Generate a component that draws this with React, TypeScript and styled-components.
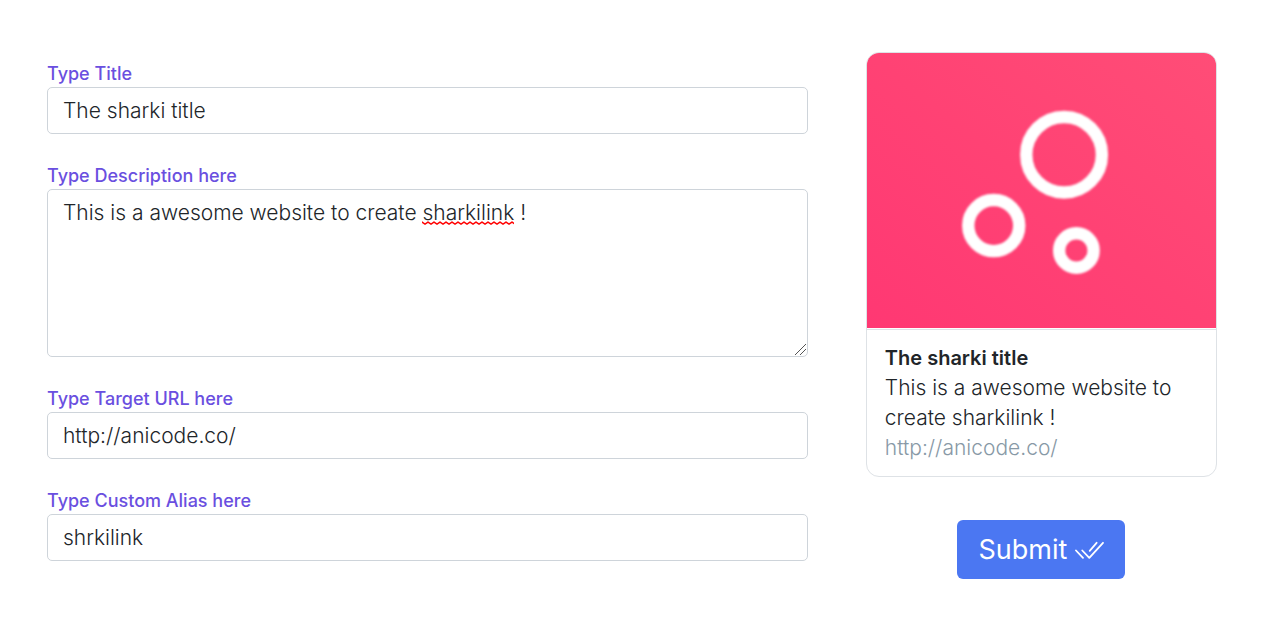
import { useState } from "react";
import styled, { createGlobalStyle, css } from "styled-components";

const GlobalStyle = createGlobalStyle`
  *, *::before, *::after { box-sizing: border-box; }
  body {
    margin: 0;
    background: #fff;
    color: #212529;
    font-family: Inter, "Open Sans", sans-serif;
    font-size: 21px;
    font-weight: 300;
    line-height: 30px;
  }
`;

const Page = styled.main`
  display: grid;
  grid-template-columns: minmax(0, 13fr) minmax(0, 6fr);
  gap: 58px;
  align-items: start;
  padding: 52px 52px 52px 47px;
`;

const Fields = styled.form`
  display: flex;
  flex-direction: column;
  gap: 30px;
  padding-top: 10px;
`;

const Field = styled.div`
  display: flex;
  flex-direction: column;
`;

const Label = styled.label`
  padding-bottom: 2px;
  color: #6a4fe0;
  font-size: 18px;
  font-weight: 500;
  line-height: 23px;
`;

const control = css`
  display: block;
  width: 100%;
  margin: 0;
  padding: 8px 15px;
  border: 1px solid #ced4da;
  border-radius: 5px;
  background: #fff;
  color: #212529;
  font: inherit;
  outline: none;
`;

const TextInput = styled.input`
  ${control}
  height: 47px;
`;

const TextArea = styled.textarea`
  ${control}
  height: 168px;
  resize: vertical;

  &::-webkit-resizer {
    background: linear-gradient(
        135deg,
        transparent 47%,
        #555 47%,
        #555 53%,
        transparent 53%,
        transparent 70%,
        #555 70%,
        #555 76%,
        transparent 76%
      )
      3px 3px / 11px 11px no-repeat;
  }
`;

const AreaWrap = styled.div`
  position: relative;
`;

const Squiggle = styled.svg`
  position: absolute;
  top: 32px;
  left: 375px;
  pointer-events: none;
`;

const Side = styled.aside`
  display: flex;
  flex-direction: column;
  align-items: center;
  gap: 43px;
`;

const Card = styled.article`
  width: 100%;
  overflow: hidden;
  border: 1px solid #dee2e6;
  border-radius: 13px;
`;

const Cover = styled.svg`
  display: block;
  width: 100%;
  height: auto;
`;

const CardBody = styled.div`
  margin-top: 1px;
  padding: 13px 18px;
  border-top: 1px solid #dee2e6;
`;

const CardTitle = styled.h2`
  margin: 0;
  font-size: 20px;
  font-weight: 600;
  line-height: 30px;
`;

const CardText = styled.p`
  margin: 0;
`;

const CardUrl = styled.p`
  margin: 0;
  color: #8899a6;
`;

const SubmitButton = styled.button`
  display: flex;
  align-items: center;
  gap: 8px;
  height: 59px;
  padding: 0 21px;
  border: 0;
  border-radius: 6px;
  background: #4b77f2;
  color: #fff;
  font-family: inherit;
  font-size: 27px;
  font-weight: 400;
  cursor: pointer;
`;

export default function App() {
  const [title, setTitle] = useState("The sharki title");
  const [description, setDescription] = useState(
    "This is a awesome website to create sharkilink !"
  );
  const [url, setUrl] = useState("http://anicode.co/");
  const [alias, setAlias] = useState("shrkilink");

  return (
    <>
      <GlobalStyle />
      <Page>
        <Fields id="link-form" onSubmit={(e) => e.preventDefault()}>
          <Field>
            <Label htmlFor="title">Type Title</Label>
            <TextInput id="title" value={title} onChange={(e) => setTitle(e.target.value)} />
          </Field>
          <Field>
            <Label htmlFor="description">Type Description here</Label>
            <AreaWrap>
              <TextArea
                id="description"
                spellCheck={false}
                value={description}
                onChange={(e) => setDescription(e.target.value)}
              />
              {description.includes("sharkilink") && (
                <Squiggle width="92" height="4" aria-hidden="true">
                  <defs>
                    <pattern id="wave" width="6" height="4" patternUnits="userSpaceOnUse">
                      <path d="M-1 0 L0 1 L3 3 L6 1 L7 0" fill="none" stroke="#f00" strokeWidth="1.5" />
                    </pattern>
                  </defs>
                  <rect width="92" height="4" fill="url(#wave)" />
                </Squiggle>
              )}
            </AreaWrap>
          </Field>
          <Field>
            <Label htmlFor="url">Type Target URL here</Label>
            <TextInput id="url" value={url} onChange={(e) => setUrl(e.target.value)} />
          </Field>
          <Field>
            <Label htmlFor="alias">Type Custom Alias here</Label>
            <TextInput
              id="alias"
              spellCheck={false}
              value={alias}
              onChange={(e) => setAlias(e.target.value)}
            />
          </Field>
        </Fields>

        <Side>
          <Card>
            <Cover viewBox="0 0 349 275" role="img" aria-label="Link cover">
              <defs>
                <linearGradient id="pink" x1="0" y1="1" x2="1" y2="0">
                  <stop offset="0" stopColor="#ff3873" />
                  <stop offset="0.5" stopColor="#ff4274" />
                  <stop offset="1" stopColor="#ff4d77" />
                </linearGradient>
                <filter id="soft">
                  <feGaussianBlur stdDeviation="0.8" />
                </filter>
              </defs>
              <rect width="349" height="275" fill="url(#pink)" />
              <g fill="none" stroke="#fff" strokeWidth="12.4" filter="url(#soft)">
                <circle cx="197" cy="101.7" r="37.8" />
                <circle cx="126.7" cy="172.5" r="25.5" />
                <circle cx="209.3" cy="197.4" r="17.2" />
              </g>
            </Cover>
            <CardBody>
              <CardTitle>{title}</CardTitle>
              <CardText>{description}</CardText>
              <CardUrl>{url}</CardUrl>
            </CardBody>
          </Card>
          <SubmitButton type="submit" form="link-form">
            Submit
            <svg width="29" height="18" viewBox="0 0 29 18" aria-hidden="true">
              <g
                fill="none"
                stroke="#fff"
                strokeWidth="1.8"
                strokeLinecap="round"
                strokeLinejoin="round"
              >
                <path d="M1 9.5 L8 16.8" />
                <path d="M7.3 9.5 L14.3 16.8 L28 1.8" />
                <path d="M14.7 9.8 L21.6 1.8" />
              </g>
            </svg>
          </SubmitButton>
        </Side>
      </Page>
    </>
  );
}
